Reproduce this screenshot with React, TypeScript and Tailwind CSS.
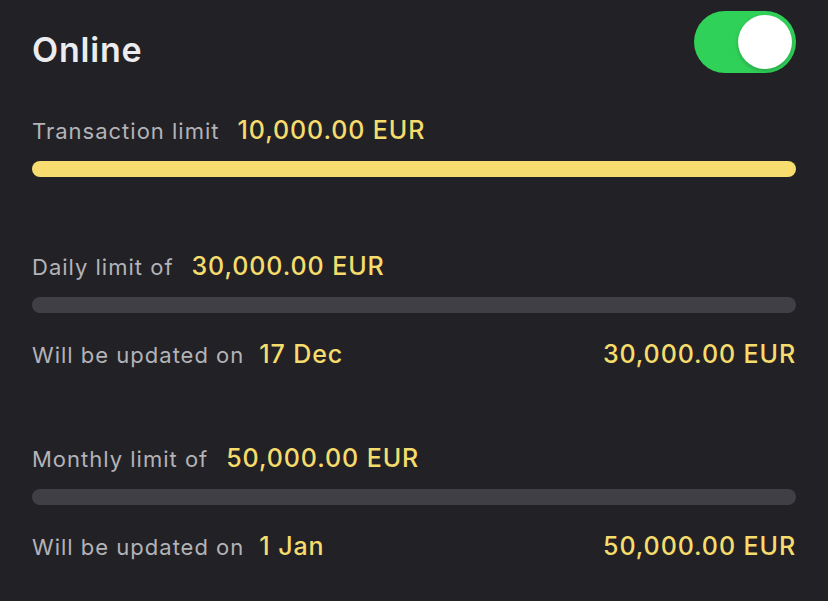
import React from "react";

const font = { fontFamily: "Inter, 'Noto Sans', sans-serif" };

const Toggle = () => (
  <div className="flex h-[62px] w-[102px] items-center justify-end rounded-full bg-[#30d158] px-[4px]">
    <div className="h-[54px] w-[54px] rounded-full bg-white shadow-[0_2px_4px_rgba(0,0,0,0.2)]" />
  </div>
);

const LimitRow = ({ label, value }: { label: string; value: string }) => (
  <div className="flex h-[30px] items-center">
    <span className="text-[22px] tracking-[1px] text-[#b3b3b8]">{label}</span>
    <span className="ml-[18px] text-[25px] font-medium tracking-[0.9px] text-[#f6dc6c]">{value}</span>
  </div>
);

const UpdateRow = ({ date, amount }: { date: string; amount: string }) => (
  <div className="flex h-[30px] items-center justify-between">
    <div className="flex items-center">
      <span className="text-[22px] tracking-[1px] text-[#b3b3b8]">Will be updated on</span>
      <span className="ml-[15px] text-[25px] font-medium tracking-[0.9px] text-[#f6dc6c]">{date}</span>
    </div>
    <span className="text-[25px] font-medium tracking-[0.9px] text-[#f6dc6c]">{amount}</span>
  </div>
);

export default function App() {
  return (
    <div className="h-[601px] w-[828px] overflow-hidden bg-[#222226] px-8" style={font}>
      <div className="flex items-start justify-between pt-[11px]">
        <h1 className="mt-[19px] text-[34px] font-semibold leading-[40px] tracking-[0.8px] text-[#ececee]">Online</h1>
        <Toggle />
      </div>

      <div className="mt-[43px]">
        <LimitRow label="Transaction limit" value="10,000.00 EUR" />
      </div>
      <div className="mt-[15px] h-[16px] rounded-full bg-[#f7dc6f]" />

      <div className="mt-[75px]">
        <LimitRow label="Daily limit of" value="30,000.00 EUR" />
      </div>
      <div className="mt-[15px] h-[16px] rounded-full bg-[#3f3f45]" />
      <div className="mt-[27px]">
        <UpdateRow date="17 Dec" amount="30,000.00 EUR" />
      </div>

      <div className="mt-[74px]">
        <LimitRow label="Monthly limit of" value="50,000.00 EUR" />
      </div>
      <div className="mt-[15px] h-[16px] rounded-full bg-[#3f3f45]" />
      <div className="mt-[27px]">
        <UpdateRow date="1 Jan" amount="50,000.00 EUR" />
      </div>
    </div>
  );
}
